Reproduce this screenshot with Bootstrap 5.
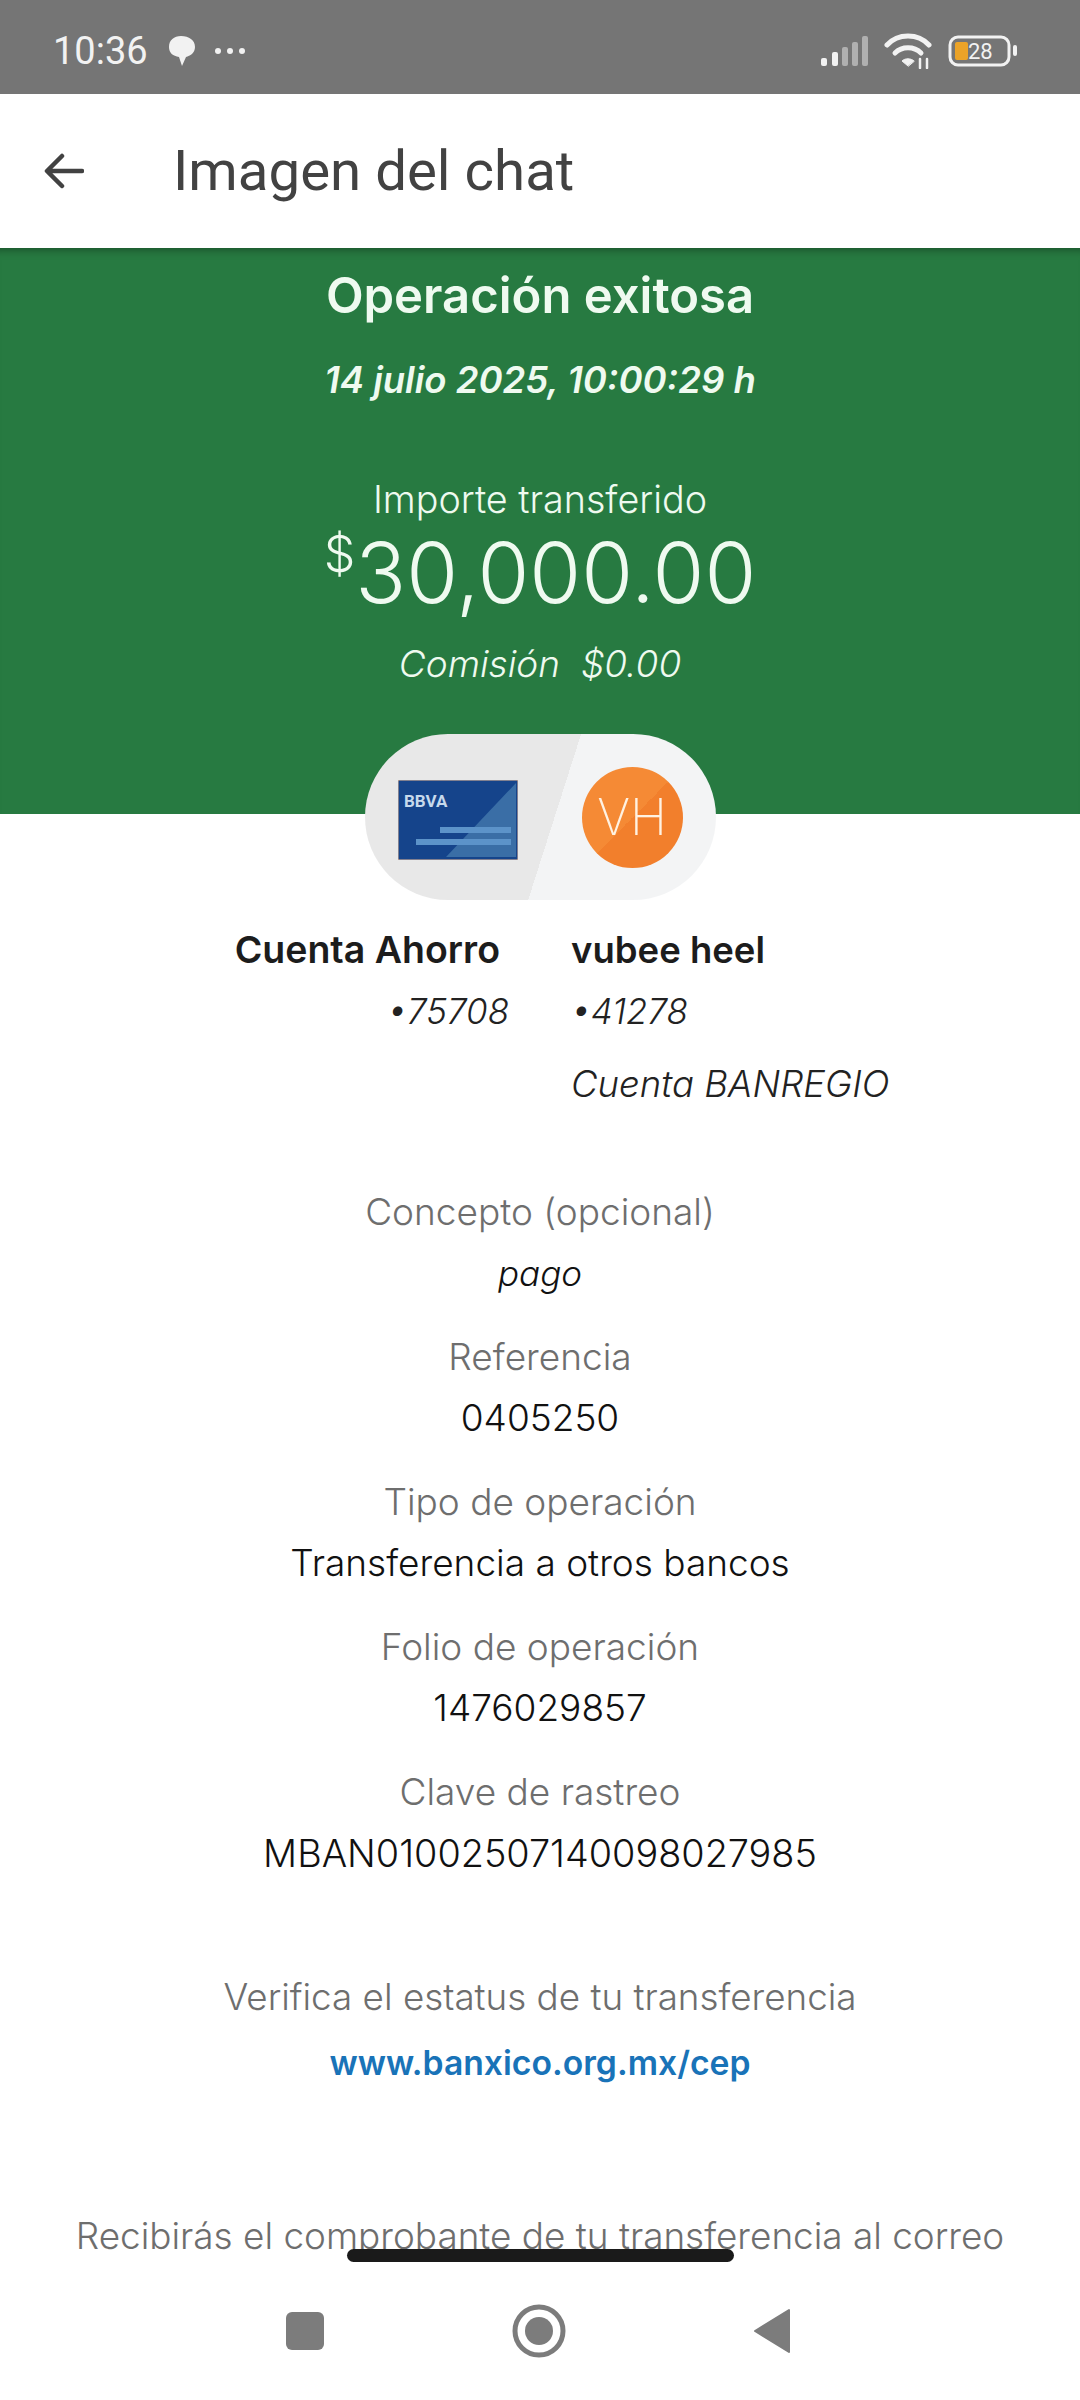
<!DOCTYPE html><html lang="en">
<head>
  <meta charset="UTF-8">
  <title>Imagen del chat</title>
  <meta name="viewport" content="width=device-width, initial-scale=1.0">
  <link href="https://cdn.jsdelivr.net/npm/bootstrap@5.3.0/dist/css/bootstrap.min.css" rel="stylesheet">
  <style>
    body {
      background-color: #fff;
      font-family: "Inter", "Liberation Sans", sans-serif;
      height: 2400px;
      overflow: hidden;
    }
    .phone-screen { height: 2400px; }
    .status-strip {
      height: 94px;
      background-color: #757575;
      color: #f2f2f2;
      font-family: Roboto, sans-serif;
      padding: 8px 62px 0 53px;
    }
    .status-time { font-size: 38px; line-height: 1; }
    .title-strip {
      height: 154px;
      background-color: #fff;
      padding-left: 44px;
      color: #424242;
      font-family: Roboto, sans-serif;
      font-size: 56.4px;
    }
    .title-text { margin-left: 89px; }
    .green-head {
      height: 566px;
      background-color: #277a41;
      color: #effaf0;
      box-shadow: inset 0 10px 8px -8px rgba(0, 0, 0, .35);
      padding-top: 21px;
    }
    .head-title { font-size: 49px; font-weight: 600; line-height: 54px; }
    .head-date { font-size: 36.5px; font-style: italic; font-weight: 600; line-height: 44px; margin-top: 35px; }
    .head-label { font-size: 37.7px; line-height: 44px; margin-top: 75px; font-weight: 300; }
    .head-amount { font-size: 84px; line-height: 92px; font-weight: 300; margin-top: 6px; }
    .head-amount sup { font-size: 50px; top: -.62em; }
    .head-fee { font-size: 37px; font-style: italic; font-weight: 300; line-height: 44px; margin-top: 23px; }
    .route-pill {
      width: 351px;
      height: 166px;
      margin: -80px auto 0;
      border-radius: 83px;
      background: linear-gradient(107.7deg, #e8e8e8 0 53.5%, #f3f4f5 53.5% 100%);
      position: relative;
      padding: 46px 0 0 33px;
    }
    .route-circle {
      width: 101px;
      height: 101px;
      margin-left: 64px;
      margin-top: -13px;
      background: linear-gradient(135deg, #f58a35 50%, #f27f2c 50%);
      color: #fff2e2;
      font-size: 50px;
      font-weight: 200;
    }
    .party-row { margin-top: 28px; font-size: 36.5px; color: #1c1c1c; }
    .party-left { width: 509px; text-align: right; }
    .party-right { margin-left: 62px; }
    .party-name { font-weight: 600; line-height: 44px; }
    .party-left .party-name { margin-right: 9px; font-size: 37.5px; }
    .party-line { font-style: italic; font-weight: 300; line-height: 44px; margin-top: 17px; color: #222; }
    .party-line.acct-no { font-size: 35px; }
    .party-line + .party-line { margin-top: 29px; }
    .info-list { margin-top: 84px; text-align: center; font-size: 37px; font-weight: 300; }
    .info-label { color: #6e6e6e; line-height: 44px; }
    .info-value { color: #111; line-height: 44px; margin-top: 17px; margin-bottom: 40px; }
    .info-value.slanted { font-style: italic; font-size: 35px; }
    .info-value.track-code { font-size: 37.8px; }
    .verify-text { color: #6e6e6e; font-size: 36.8px; line-height: 44px; margin-top: 100px; }
    .verify-link { color: #1973b8; font-size: 33.7px; font-weight: 600; line-height: 44px; margin-top: 22px; text-decoration: none; display: block; }
    .mail-note { color: #6e6e6e; font-size: 36.9px; line-height: 44px; margin-top: 129px; white-space: nowrap; }
    .gesture-line {
      position: absolute;
      left: 347px;
      top: 2249px;
      width: 387px;
      height: 13px;
      border-radius: 7px;
      background-color: #1a1a1a;
    }
    .nav-strip {
      position: absolute;
      left: 0;
      right: 0;
      top: 2262px;
      height: 138px;
      background-color: #fff;
      padding: 0 4px 1px 0;
      gap: 187px;
    }
  </style>
</head>
<body>
  <div class="phone-screen position-relative overflow-hidden">
    <div class="status-strip d-flex align-items-center">
      <span class="status-time">10:36</span>
      <svg class="ms-3" width="34" height="40" viewBox="0 0 34 40"><path d="M17 5c8 0 14 4 14 11 0 6-5 9-9 10l-4 9-3-9c-6-1-10-4-10-10C5 9 10 5 17 5z" fill="#f2f2f2"/></svg>
      <svg class="ms-3" width="34" height="10" viewBox="0 0 34 10"><circle cx="4" cy="5" r="3" fill="#f2f2f2"/><circle cx="16" cy="5" r="3" fill="#f2f2f2"/><circle cx="28" cy="5" r="3" fill="#f2f2f2"/></svg>
      <div class="ms-auto d-flex align-items-center">
        <svg width="48" height="32" viewBox="0 0 48 32">
          <rect x="1" y="23" width="6" height="8" rx="2" fill="#f2f2f2"/>
          <rect x="12" y="17" width="6" height="14" rx="2" fill="#f2f2f2"/>
          <rect x="22" y="12" width="6" height="19" rx="2" fill="#b0b0b0"/>
          <rect x="32" y="7" width="6" height="24" rx="2" fill="#b0b0b0"/>
          <rect x="42" y="1" width="6" height="30" rx="2" fill="#b0b0b0"/>
        </svg>
        <svg class="ms-3" width="48" height="36" viewBox="0 0 48 36" fill="none" stroke="#f2f2f2" stroke-width="5" stroke-linecap="round">
          <path d="M3 12C14 0 34 0 45 12"/>
          <path d="M11 20c7-7 19-7 26 0"/>
          <path d="M24 33l-6-5c3-3 9-3 12 0z" fill="#f2f2f2" stroke-width="1"/>
          <path d="M36 26v9M43 26v9" stroke-width="2.5"/>
        </svg>
        <div class="ms-3">
          <svg class="d-block" width="70" height="32" viewBox="0 0 70 32">
            <rect x="2" y="2" width="59" height="28" rx="8" fill="none" stroke="#f2f2f2" stroke-width="3"/>
            <rect x="7" y="7" width="13" height="18" rx="2" fill="#eba328"/>
            <rect x="65" y="10" width="4" height="11" rx="2" fill="#f2f2f2"/>
            <text x="20" y="24" font-family="Roboto, sans-serif" font-size="22" fill="#f2f2f2">28</text>
          </svg>
        </div>
      </div>
    </div>

    <div class="title-strip d-flex align-items-center">
      <svg width="40" height="36" viewBox="0 0 40 36" fill="none" stroke="#424242" stroke-width="4.5" stroke-linecap="round" stroke-linejoin="round"><path d="M38 18H4M18 3 3 18l15 15"/></svg>
      <span class="title-text">Imagen del chat</span>
    </div>

    <div class="green-head text-center">
      <div class="head-title">Operación exitosa</div>
      <div class="head-date">14 julio 2025, 10:00:29 h</div>
      <div class="head-label">Importe transferido</div>
      <div class="head-amount"><sup>$</sup>30,000.00</div>
      <div class="head-fee">Comisión&nbsp; $0.00</div>
    </div>

    <div class="route-pill d-flex">
      <svg width="120" height="80" viewBox="0 0 120 80">
        <rect width="120" height="80" fill="#15448b" stroke="#f0bd95" stroke-width="1"/>
        <path d="M118 3v74H48z" fill="#3a6ea6"/>
        <rect x="42" y="47" width="71" height="6" fill="#5c93c9"/>
        <rect x="18" y="59" width="95" height="6" fill="#5c93c9"/>
        <text x="6" y="27" font-family="Roboto, sans-serif" font-weight="700" font-size="17" fill="#c6d9ec">BBVA</text>
      </svg>
      <div class="route-circle rounded-circle d-flex align-items-center justify-content-center">VH</div>
    </div>

    <div class="party-row d-flex">
      <div class="party-left">
        <div class="party-name">Cuenta Ahorro</div>
        <div class="party-line acct-no">•75708</div>
      </div>
      <div class="party-right">
        <div class="party-name">vubee heel</div>
        <div class="party-line acct-no">•41278</div>
        <div class="party-line">Cuenta BANREGIO</div>
      </div>
    </div>

    <div class="info-list">
      <div class="info-label">Concepto (opcional)</div>
      <div class="info-value slanted">pago</div>
      <div class="info-label">Referencia</div>
      <div class="info-value">0405250</div>
      <div class="info-label">Tipo de operación</div>
      <div class="info-value">Transferencia a otros bancos</div>
      <div class="info-label">Folio de operación</div>
      <div class="info-value">1476029857</div>
      <div class="info-label">Clave de rastreo</div>
      <div class="info-value track-code">MBAN01002507140098027985</div>
      <div class="verify-text">Verifica el estatus de tu transferencia</div>
      <a class="verify-link" href="#">www.banxico.org.mx/cep</a>
      <div class="mail-note">Recibirás el comprobante de tu transferencia al correo</div>
    </div>

    <div class="nav-strip d-flex align-items-center justify-content-center">
      <svg width="40" height="40" viewBox="0 0 40 40"><rect x="1" y="1" width="38" height="38" rx="6" fill="#7c7c7c"/></svg>
      <svg width="54" height="54" viewBox="0 0 54 54"><circle cx="27" cy="27" r="24" fill="none" stroke="#7c7c7c" stroke-width="5"/><circle cx="27" cy="27" r="14" fill="#7c7c7c"/></svg>
      <svg width="38" height="46" viewBox="0 0 38 46"><path d="M36 2v42L2 23z" fill="#7c7c7c" stroke="#7c7c7c" stroke-width="2" stroke-linejoin="round"/></svg>
    </div>
    <div class="gesture-line"></div>
  </div>
  <script src="https://cdn.jsdelivr.net/npm/bootstrap@5.3.0/dist/js/bootstrap.bundle.min.js"></script>
</body>
</html>
